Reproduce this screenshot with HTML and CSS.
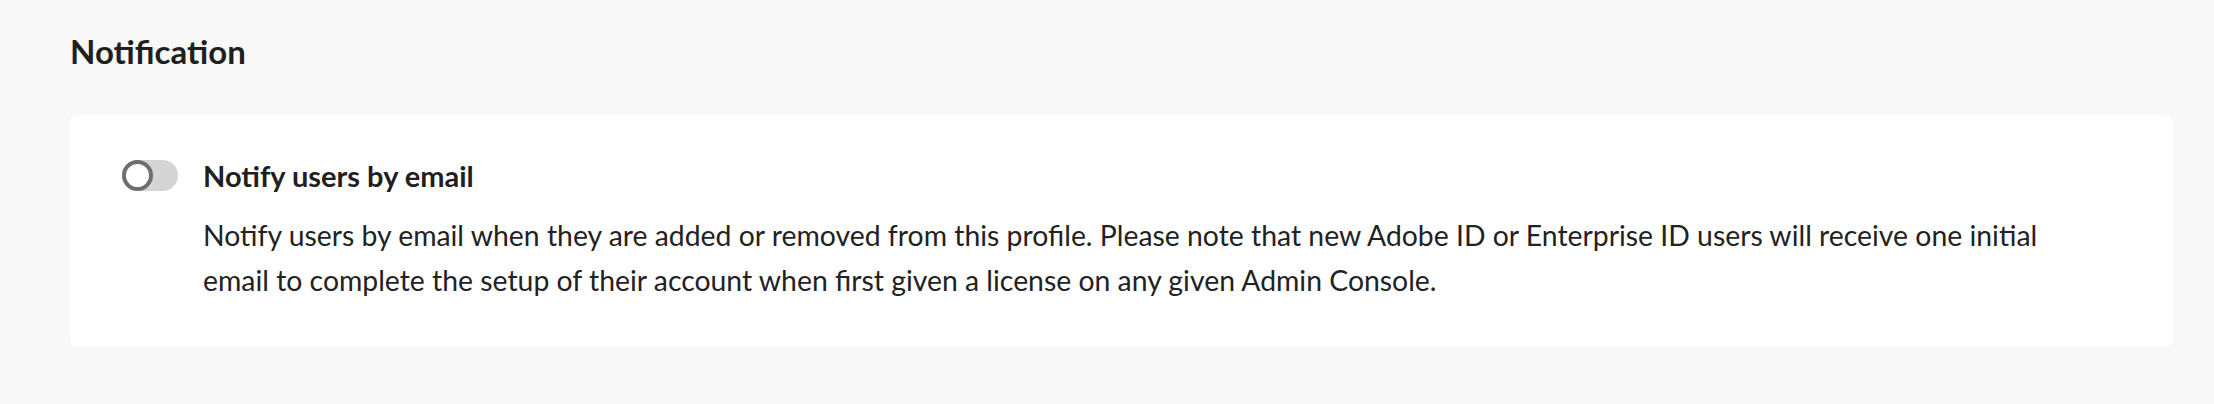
FILE: index.html
```html
<!DOCTYPE html>
<html lang="en">
<head>
<meta charset="utf-8">
<title>Notification</title>
<link rel="stylesheet" href="styles.css">
</head>
<body>
<main class="page">
  <h2 class="section-title">Notification</h2>
  <section class="card">
    <div class="setting">
      <label class="switch">
        <input type="checkbox" class="switch-input">
        <span class="switch-track"><span class="switch-thumb"></span></span>
      </label>
      <div class="setting-label">Notify users by email</div>
      <p class="setting-desc">Notify users by email when they are added or removed from this profile. Please note that new Adobe ID or Enterprise ID users will receive one initial email to complete the setup of their account when first given a license on any given Admin Console.</p>
    </div>
  </section>
</main>
</body>
</html>
```
FILE: styles.css
```css
html, body {
  margin: 0;
  padding: 0;
  background: #f8f8f8;
}
body {
  font-family: "Lato", "Liberation Sans", sans-serif;
  color: #222222;
}
.page {
  padding: 32px 41px 0 70px;
}
.section-title {
  margin: 0;
  font-size: 33px;
  font-weight: 700;
  line-height: 1.2;
  color: #1f1f1f;
}
.card {
  margin-top: 43px;
  background: #ffffff;
  border-radius: 7px;
  padding: 41px 52px 44px 52px;
  box-sizing: border-box;
}
.setting {
  display: grid;
  grid-template-columns: 56px 1880px;
  column-gap: 25px;
  align-items: center;
}
.switch {
  position: relative;
  display: block;
  width: 56px;
  height: 31px;
}
.switch-input {
  position: absolute;
  opacity: 0;
  margin: 0;
  width: 100%;
  height: 100%;
}
.switch-track {
  display: block;
  width: 56px;
  height: 31px;
  border-radius: 16px;
  background: #d5d5d5;
}
.switch-thumb {
  display: block;
  width: 31px;
  height: 31px;
  box-sizing: border-box;
  border-radius: 50%;
  border: 4px solid #6e6e6e;
  background: #ffffff;
}
.setting-label {
  font-size: 29px;
  font-weight: 700;
  line-height: 40px;
  color: #1f1f1f;
}
.setting-desc {
  grid-column: 2;
  margin: 17px 0 0 0;
  font-size: 28.36px;
  line-height: 45px;
  color: #222222;
}
```
